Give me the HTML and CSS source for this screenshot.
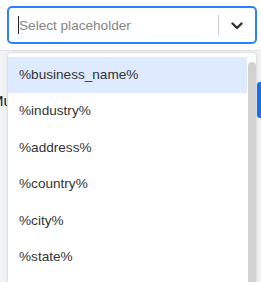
FILE: index.html
```html
<!DOCTYPE html>
<html lang="en">
<head>
  <meta charset="UTF-8">
  <title>Select placeholder</title>
  <link rel="stylesheet" href="styles.css">
</head>
<body>
  <div class="select">
    <div class="value"><span class="caret"></span>Select placeholder</div>
    <span class="sep"></span>
    <div class="indicator">
      <svg width="12" height="8" viewBox="0 0 12 8"><path d="M1.5 1.5 L6 6 L10.5 1.5" fill="none" stroke="#333" stroke-width="2.4" stroke-linecap="round" stroke-linejoin="round"/></svg>
    </div>
  </div>

  <div class="backdrop">
    <div class="bg-row">
      <span class="bg-label">Mu</span>
      <span class="bg-btn"></span>
    </div>
  </div>

  <div class="menu">
    <div class="option active">%business_name%</div>
    <div class="option">%industry%</div>
    <div class="option">%address%</div>
    <div class="option">%country%</div>
    <div class="option">%city%</div>
    <div class="option">%state%</div>
    <div class="scrollbar"></div>
  </div>
</body>
</html>
```

FILE: styles.css
```css
body { margin: 0; background: #fff; font-family: "Liberation Sans", Arial, sans-serif; overflow: hidden; height: 282px; position: relative; }
.select { margin: 6px 4px 0 7px; height: 38px; box-sizing: border-box; border: 2px solid #2684ff; border-radius: 5px; display: flex; align-items: center; background: #fff; }
.value { flex: 1; padding-left: 9px; font-size: 13.6px; color: #858585; display: flex; align-items: center; }
.caret { width: 1px; height: 18px; background: #222; }
.sep { width: 1px; height: 20px; background: #ccc; }
.indicator { width: 36px; display: flex; justify-content: center; align-items: center; padding-top: 1px; }
.backdrop { margin-top: 6px; border-top: 1px solid #e2e2e2; background: #f3f4f6; height: 240px; }
.bg-row { display: flex; justify-content: space-between; align-items: center; padding-top: 31px; }
.bg-label { font-size: 15px; color: #222; margin-left: -9px; }
.bg-btn { width: 10px; height: 36px; background: #1a73e8; border-radius: 3px; margin-right: -6px; }
.menu { position: absolute; top: 52px; left: 7px; width: 250px; height: 240px; box-sizing: border-box; background: #fff; border: 1px solid #e0e0e0; border-radius: 4px; padding: 4px 9px 0 0; box-shadow: 0 1px 4px rgba(0,0,0,0.08); overflow: hidden; }
.option { height: 36.4px; line-height: 36.4px; padding-left: 11px; font-size: 13.6px; color: #333; }
.option.active { background: #deebff; }
.scrollbar { position: absolute; top: 9px; right: 0; width: 8px; height: 240px; background: #d2d2d2; border-radius: 4px 4px 0 0; }
```
